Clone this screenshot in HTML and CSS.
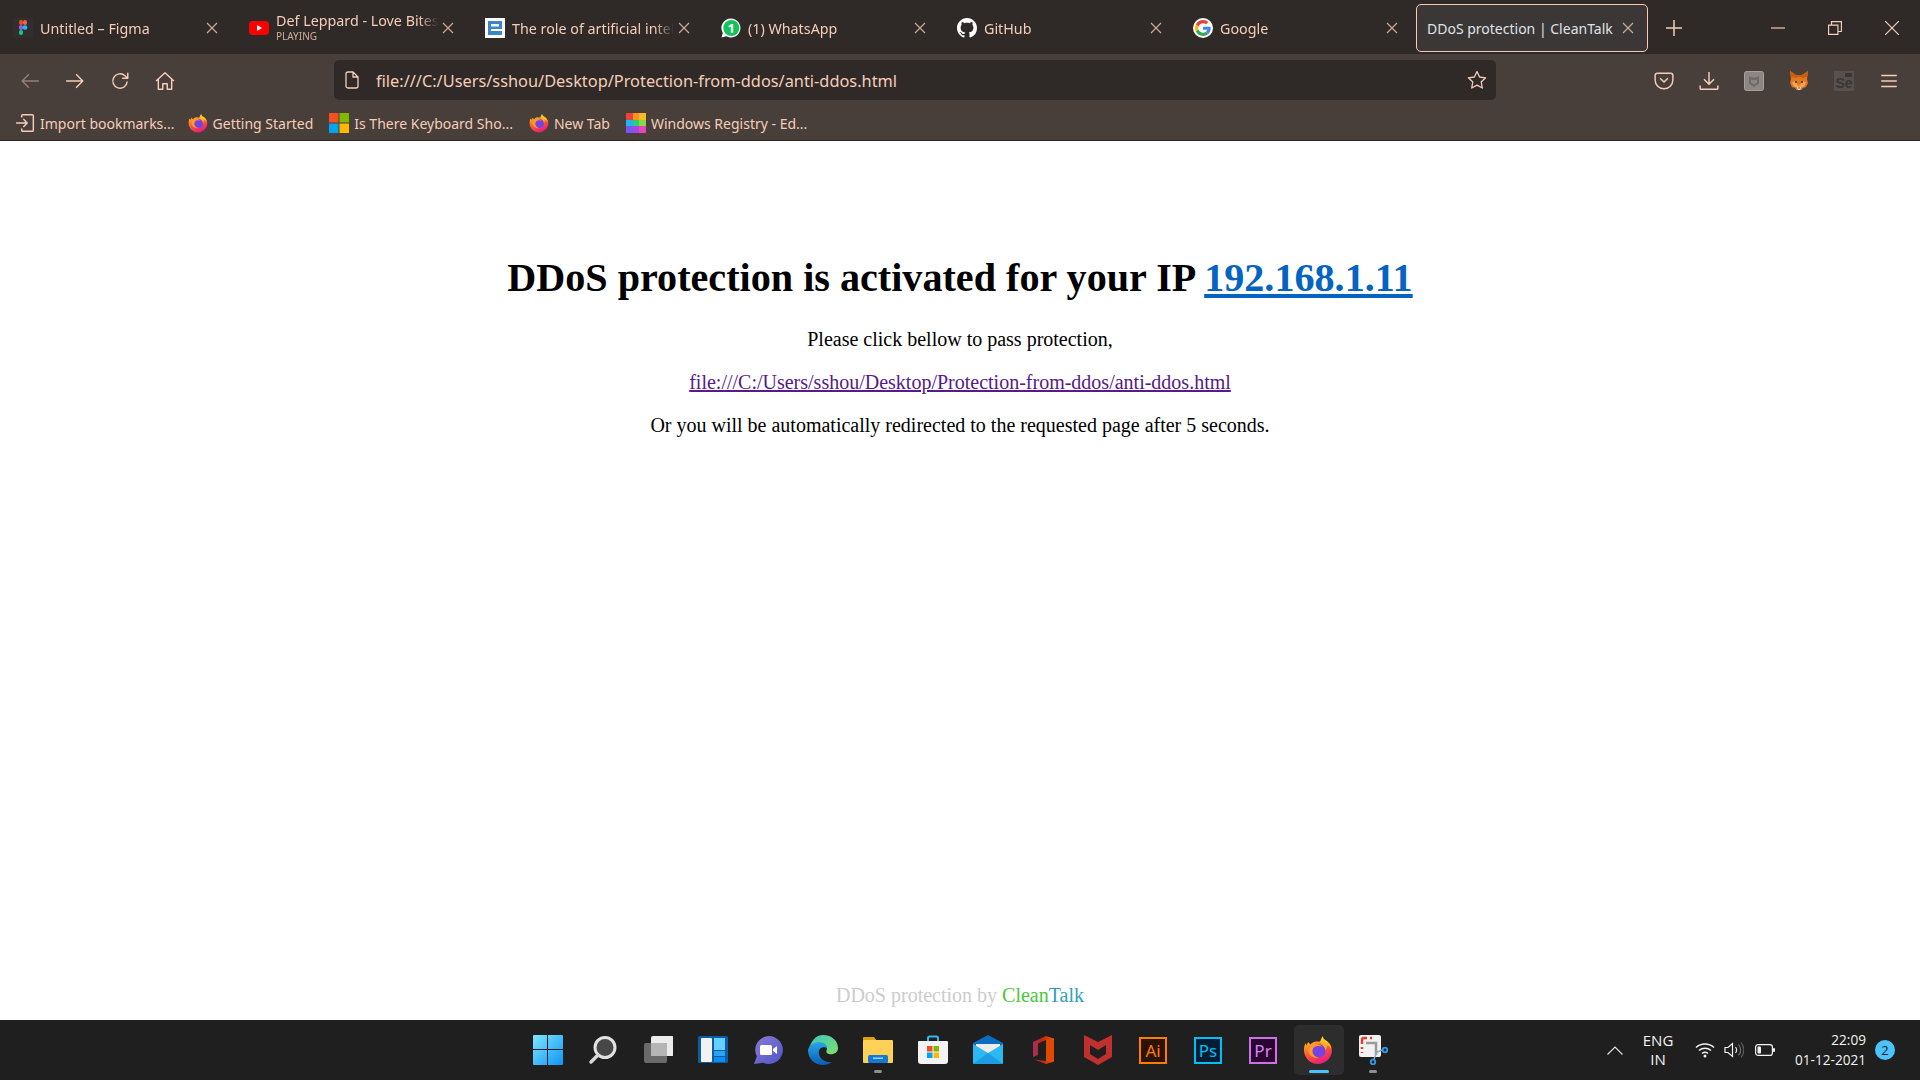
FILE: index.html
```html
<!DOCTYPE html>
<html lang="en">
<head>
  <meta charset="UTF-8">
  <title>DDoS protection | CleanTalk</title>
  <link rel="stylesheet" href="styles.css">
</head>
<body>
  <svg class="defs" width="0" height="0">
    <defs>
      <linearGradient id="fx-body" x1="0.2" y1="0" x2="0.7" y2="1">
        <stop offset="0" stop-color="#ffb01f"/>
        <stop offset="0.45" stop-color="#ff5a2c"/>
        <stop offset="1" stop-color="#e31587"/>
      </linearGradient>
      <linearGradient id="fx-top" x1="0.5" y1="0" x2="0.3" y2="1">
        <stop offset="0" stop-color="#ffe226"/>
        <stop offset="1" stop-color="#ff8a1f"/>
      </linearGradient>
      <symbol id="firefox" viewBox="0 0 32 32">
        <path fill="url(#fx-body)" d="M30 12c.9 2.300 1 4.600.7 6.500C29.500 25.800 23.400 31 16 31 7.700 31 1 24.300 1 16c0-2.600.6-5.400 2-7.500 0 1 .3 2 .8 2.800.3-1.500 1.200-2.900 2.300-3.800.3 1.300 1 2 2 2.400C10.300 7.500 13 6.500 15.500 7 22 7 28 7 30 12z"/>
        <path fill="url(#fx-top)" d="M21 1c.3 2.800 2.200 3.800 4.500 5.500 2.900 2.200 4.500 5.200 4.700 8.500-1.200-2.400-3-3.500-4.800-4.200.4 2-.4 5-3 6.700 1-3-.2-7.300-4.300-9.500C18.500 6 19.500 3.500 21 1z"/>
        <circle cx="17" cy="17" r="7" fill="#7542e5"/>
        <path fill="#ff9a2c" d="M6 14c2-3.500 6-5 10-4 2 .4 3.500 1.400 4.500 2.700-3-1.700-7-1.200-9.300.8-.9.900-1.300 2-1.300 3.200-.2 3.500 3 7 7 7.300-5 1.200-10-2-11.200-6C5.400 16.500 5.500 15 6 14z"/>
      </symbol>
      <symbol id="close-x" viewBox="0 0 12 12">
        <path d="M1 1l10 10M11 1L1 11" fill="none" stroke="currentColor" stroke-width="1.100"/>
      </symbol>
    </defs>
  </svg>

  <!-- Tab strip -->
  <div class="tab-strip">
    <div class="tab">
      <svg class="favicon" viewBox="0 0 20 20">
        <rect width="20" height="20" fill="#322e30"/>
        <rect x="6" y="2" width="4" height="5" rx="2" fill="#e44d26"/>
        <rect x="10" y="2" width="4" height="5" rx="2" fill="#f2604a"/>
        <rect x="6" y="7" width="4" height="5" rx="2" fill="#9a5cf0"/>
        <circle cx="12" cy="9.500" r="2.300" fill="#1abcfe"/>
        <rect x="6" y="12" width="4" height="5" rx="2" fill="#0acf83"/>
      </svg>
      <span class="tab-title">Untitled – Figma</span>
      <svg class="tab-close"><use href="#close-x"/></svg>
    </div>
    <div class="tab">
      <svg class="favicon" viewBox="0 0 20 20">
        <rect y="3" width="20" height="14" rx="4" fill="#f00"/>
        <path d="M8 7l5 3-5 3z" fill="#fff"/>
      </svg>
      <div class="tab-title two-line">
        <span>Def Leppard - Love Bites</span>
        <small>PLAYING</small>
      </div>
      <svg class="tab-close"><use href="#close-x"/></svg>
    </div>
    <div class="tab">
      <svg class="favicon" viewBox="0 0 20 20">
        <rect width="20" height="20" fill="#fff"/>
        <path d="M3 3h14v8H6v2h11v4H3z" fill="#3b87c6"/>
        <rect x="6" y="6" width="8" height="2.500" fill="#fff"/>
      </svg>
      <span class="tab-title">The role of artificial intelligence</span>
      <svg class="tab-close"><use href="#close-x"/></svg>
    </div>
    <div class="tab">
      <svg class="favicon" viewBox="0 0 20 20">
        <path d="M10 .5a9.500 9.500 0 1 1-4.700 17.800L.5 19.500l1.300-4.600A9.500 9.500 0 0 1 10 .5z" fill="#fff"/>
        <circle cx="10.300" cy="10" r="8" fill="#12c35c"/>
        <text class="wa-count" x="10.300" y="14.500">1</text>
      </svg>
      <span class="tab-title">(1) WhatsApp</span>
      <svg class="tab-close"><use href="#close-x"/></svg>
    </div>
    <div class="tab">
      <svg class="favicon" viewBox="0 0 16 16">
        <path fill="#fff" d="M8 0C3.580 0 0 3.580 0 8c0 3.540 2.290 6.530 5.470 7.590.4.070.55-.17.55-.38 0-.19-.01-.82-.01-1.490-2.010.37-2.530-.49-2.690-.94-.09-.23-.48-.94-.82-1.130-.28-.15-.68-.52-.01-.53.630-.01 1.080.58 1.230.82.720 1.210 1.870.87 2.330.66.070-.52.280-.87.510-1.070-1.780-.2-3.640-.89-3.640-3.950 0-.87.310-1.590.820-2.150-.08-.2-.36-1.020.080-2.120 0 0 .67-.21 2.200.82.640-.18 1.320-.27 2-.27.680 0 1.360.09 2 .27 1.530-1.040 2.200-.82 2.200-.82.440 1.100.160 1.920.080 2.120.510.560.820 1.270.820 2.150 0 3.070-1.870 3.750-3.650 3.950.290.250.540.730.540 1.480 0 1.070-.01 1.930-.01 2.200 0 .21.150.46.550.38A8.013 8.013 0 0 0 16 8c0-4.420-3.580-8-8-8z"/>
      </svg>
      <span class="tab-title">GitHub</span>
      <svg class="tab-close"><use href="#close-x"/></svg>
    </div>
    <div class="tab">
      <svg class="favicon" viewBox="-6 -6 60 60">
        <circle cx="24" cy="24" r="30" fill="#fff"/>
        <path fill="#EA4335" d="M24 9.500c3.540 0 6.710 1.220 9.210 3.600l6.850-6.850C35.900 2.380 30.470 0 24 0 14.620 0 6.510 5.380 2.560 13.220l7.980 6.190C12.430 13.720 17.740 9.500 24 9.500z"/>
        <path fill="#4285F4" d="M46.980 24.550c0-1.570-.15-3.090-.38-4.550H24v9.020h12.940c-.58 2.960-2.260 5.480-4.780 7.180l7.730 6c4.510-4.180 7.090-10.360 7.090-17.650z"/>
        <path fill="#FBBC05" d="M10.530 28.590c-.48-1.450-.76-2.990-.76-4.590s.27-3.140.76-4.590l-7.980-6.190C.92 16.460 0 20.120 0 24c0 3.880.92 7.540 2.560 10.780l7.970-6.190z"/>
        <path fill="#34A853" d="M24 48c6.480 0 11.930-2.130 15.890-5.810l-7.730-6c-2.150 1.450-4.920 2.300-8.160 2.300-6.260 0-11.570-4.220-13.470-9.910l-7.980 6.190C6.510 42.620 14.620 48 24 48z"/>
      </svg>
      <span class="tab-title">Google</span>
      <svg class="tab-close"><use href="#close-x"/></svg>
    </div>
    <div class="tab active">
      <span class="tab-title">DDoS protection | CleanTalk</span>
      <svg class="tab-close"><use href="#close-x"/></svg>
    </div>
    <svg class="new-tab" viewBox="0 0 16 16"><path d="M8 0v16M0 8h16" fill="none" stroke="currentColor" stroke-width="1.500"/></svg>
    <div class="window-controls">
      <div class="win-btn"><svg viewBox="0 0 12 12"><path d="M0 6h12" stroke="currentColor" fill="none"/></svg></div>
      <div class="win-btn"><svg viewBox="0 0 12 12"><path d="M.5 3.500h8v8h-8zM3 3.500V.5h8.500V9H8.500" stroke="currentColor" fill="none"/></svg></div>
      <div class="win-btn"><svg viewBox="0 0 12 12"><path d="M0 0l12 12M12 0L0 12" stroke="currentColor" fill="none"/></svg></div>
    </div>
  </div>

  <!-- Navigation toolbar -->
  <div class="toolbar">
    <svg class="tool-icon dim" viewBox="0 0 18 18"><path d="M17 9H2M8 3L2 9l6 6" class="stroke"/></svg>
    <svg class="tool-icon" viewBox="0 0 18 18"><path d="M1 9h15M10 3l6 6-6 6" class="stroke"/></svg>
    <svg class="tool-icon" viewBox="0 0 18 18"><path d="M15.500 9.500a6.500 6.500 0 1 1-2-5.200L16 6.500M16 1.500v5h-5" class="stroke"/></svg>
    <svg class="tool-icon" viewBox="0 0 18 18"><path d="M1 9l8-7.500L17 9M3 7.500V16.500h4v-5h4v5h4V7.500" class="stroke"/></svg>
    <div class="urlbar">
      <svg class="page-icon" viewBox="0 0 14 18"><path d="M1 3a2 2 0 0 1 2-2h5l5 5v9a2 2 0 0 1-2 2H3a2 2 0 0 1-2-2zM8 1v5h5" class="stroke"/></svg>
      <span class="url-text">file:///C:/Users/sshou/Desktop/Protection-from-ddos/anti-ddos.html</span>
      <svg class="star-icon" viewBox="0 0 20 20"><path d="M10 1.500l2.600 5.500 6 .8-4.400 4.200 1.100 6L10 15.100 4.700 18l1.100-6L1.400 7.800l6-.8z" class="stroke"/></svg>
    </div>
    <div class="toolbar-right">
      <svg class="tool-icon" viewBox="0 0 18 18"><path d="M3 2h12a2 2 0 0 1 2 2v4a8 8 0 0 1-16 0V4a2 2 0 0 1 2-2zM5.500 6.500L9 10l3.500-3.500" class="stroke"/></svg>
      <svg class="tool-icon" viewBox="0 0 18 18"><path d="M9 1v11M4.500 7.500L9 12l4.500-4.500M1 13v2.500a1 1 0 0 0 1 1h14a1 1 0 0 0 1-1V13" class="stroke"/></svg>
      <svg class="ext-icon" viewBox="0 0 20 20">
        <rect x=".5" y=".5" width="19" height="19" rx="2" fill="#8c8784" stroke="#a5a09d"/>
        <path d="M5 5l2.500 1.500h5L15 5v7.500L10 16l-5-3.500z" fill="#6f6a67"/>
        <path d="M7 8.500l3 1 3-1v3l-3 2-3-2z" fill="#8c8784"/>
      </svg>
      <svg class="ext-icon" viewBox="0 0 20 20">
        <path d="M1 0l6 4h6l6-4-1 8 1 4-2 4-3 1-1.500 2h-5L6 17l-3-1-2-4 1-4z" fill="#e2761b"/>
        <path d="M1 0l6 4h6l6-4-1 6-5 1-1-1H8L7 7 2 6z" fill="#c75f12"/>
        <path d="M3 11l4-1 1.500 3.500L10 15l1.500-1.500L13 10l4 1-1.500 4-3 1.500L11 18H9l-1.500-1.500-3-1.500z" fill="#f6a15a"/>
        <circle cx="7" cy="11" r="1" fill="#3a2a20"/>
        <circle cx="13" cy="11" r="1" fill="#3a2a20"/>
        <path d="M8 16h4l-1 3H9z" fill="#ece4dc"/>
        <path d="M9 16.500h2l-1 1.500z" fill="#222"/>
      </svg>
      <div class="ext-se"><span>Se</span></div>
      <svg class="tool-icon" viewBox="0 0 18 18"><path d="M2 4h14M2 9h14M2 14h14" class="stroke"/></svg>
    </div>
  </div>

  <!-- Bookmarks -->
  <div class="bookmarks">
    <div class="bookmark">
      <svg class="bm-icon" viewBox="0 0 18 18"><path d="M6 4V2.500a1 1 0 0 1 1-1h8.500a1 1 0 0 1 1 1v13a1 1 0 0 1-1 1H7a1 1 0 0 1-1-1V14M1 9h9.500M7.500 5.500L11 9l-3.500 3.500" class="stroke"/></svg>
      <span>Import bookmarks...</span>
    </div>
    <div class="bookmark">
      <svg class="bm-icon"><use href="#firefox"/></svg>
      <span>Getting Started</span>
    </div>
    <div class="bookmark">
      <svg class="bm-icon" viewBox="0 0 20 20">
        <rect width="9.500" height="9.500" fill="#f25022"/>
        <rect x="10.500" width="9.500" height="9.500" fill="#7fba00"/>
        <rect y="10.500" width="9.500" height="9.500" fill="#00a4ef"/>
        <rect x="10.500" y="10.500" width="9.500" height="9.500" fill="#ffb900"/>
      </svg>
      <span>Is There Keyboard Sho...</span>
    </div>
    <div class="bookmark">
      <svg class="bm-icon"><use href="#firefox"/></svg>
      <span>New Tab</span>
    </div>
    <div class="bookmark">
      <svg class="bm-icon" viewBox="0 0 20 20">
        <rect width="7" height="7" fill="#e8443a"/><rect x="7" width="6" height="7" fill="#f79321"/><rect x="13" width="7" height="7" fill="#fbb827"/>
        <rect y="7" width="7" height="6" fill="#1eb4f0"/><rect x="7" y="7" width="6" height="6" fill="#2fd06c"/><rect x="13" y="7" width="7" height="6" fill="#88d84a"/>
        <rect y="13" width="7" height="7" fill="#7a56f0"/><rect x="7" y="13" width="6" height="7" fill="#a548e8"/><rect x="13" y="13" width="7" height="7" fill="#e845b4"/>
      </svg>
      <span>Windows Registry - Ed...</span>
    </div>
  </div>

  <!-- Page content -->
  <main class="page">
    <h1>DDoS protection is activated for your IP <a class="ip-link" href="#">192.168.1.11</a></h1>
    <p>Please click bellow to pass protection,</p>
    <p><a class="visited-link" href="#">file:///C:/Users/sshou/Desktop/Protection-from-ddos/anti-ddos.html</a></p>
    <p>Or you will be automatically redirected to the requested page after 5 seconds.</p>
    <div class="page-footer">DDoS protection by <span class="clean">Clean</span><span class="talk">Talk</span></div>
  </main>

  <!-- Windows taskbar -->
  <div class="taskbar">
    <div class="task-spacer"></div>
    <div class="task-icons">
      <div class="task">
        <svg viewBox="0 0 30 30">
          <defs><linearGradient id="win-g" x1="0" y1="0" x2="1" y2="1"><stop offset="0" stop-color="#7fe6ff"/><stop offset="1" stop-color="#0f94f5"/></linearGradient></defs>
          <path d="M0 1a1 1 0 0 1 1-1h13v14H0zM15 0h14a1 1 0 0 1 1 1v13H15zM0 15h14v15H1a1 1 0 0 1-1-1zM15 15h15v14a1 1 0 0 1-1 1H15z" fill="url(#win-g)"/>
        </svg>
      </div>
      <div class="task">
        <svg viewBox="0 0 30 30">
          <circle cx="17" cy="12.500" r="10" fill="#474747" stroke="#e2e2e2" stroke-width="3"/>
          <path d="M10 20l-7 7" stroke="#d8d8d8" stroke-width="3.500" stroke-linecap="round"/>
        </svg>
      </div>
      <div class="task">
        <svg viewBox="0 0 30 30">
          <rect x="1" y="8" width="23" height="20" rx="2" fill="#6a6a6a"/>
          <rect x="8" y="1" width="23" height="20" rx="2" fill="#ececec"/>
          <rect x="8" y="8" width="16" height="13" fill="#b5b5b5"/>
        </svg>
      </div>
      <div class="task">
        <svg viewBox="0 0 30 30">
          <rect width="30" height="27" y="1" rx="1.500" fill="#0c5ca8"/>
          <rect x="3" y="3" width="11" height="24" rx="1" fill="#f2f2f2"/>
          <rect x="16" y="3" width="11" height="12" fill="#63d0ff"/>
          <rect x="16" y="16" width="11" height="5" fill="#2aa3f2"/>
          <rect x="16" y="22" width="11" height="5" fill="#0f8cf0"/>
        </svg>
      </div>
      <div class="task">
        <svg viewBox="0 0 30 30">
          <defs><linearGradient id="chat-g" x1="0" y1="0" x2="1" y2="1"><stop offset="0" stop-color="#8b7bd0"/><stop offset="1" stop-color="#4d55c8"/></linearGradient></defs>
          <path d="M16 1a14 14 0 1 1-6 26.700L1 29l2.800-7.500A14 14 0 0 1 16 1z" fill="url(#chat-g)"/>
          <rect x="7" y="10" width="12" height="10" rx="1.500" fill="#fff"/>
          <path d="M20 14l4-3v8l-4-3z" fill="#fff"/>
        </svg>
      </div>
      <div class="task">
        <svg viewBox="0 0 30 30">
          <defs>
            <linearGradient id="edge-a" x1="0" y1="0" x2="1" y2="1"><stop offset="0" stop-color="#39c8c0"/><stop offset="1" stop-color="#7ee06a"/></linearGradient>
            <linearGradient id="edge-b" x1="0" y1="0" x2="0" y2="1"><stop offset="0" stop-color="#2aa4e8"/><stop offset="1" stop-color="#0a5fb0"/></linearGradient>
          </defs>
          <path d="M15 0c9 0 15 6 15 13 0 5-5 7-9 6-3-.6-3-3-2-5 0-4-4-6-8-5-5 1-9 4-11 9C2 7 7 0 15 0z" fill="url(#edge-a)"/>
          <path d="M0 15c1-5 6-8 11-8 5 0 8 3 8 6-5-2-9 1-8 6 1 5 6 9 13 8-3 2-6 3-9 3C7 30 0 24 0 15z" fill="url(#edge-b)"/>
        </svg>
      </div>
      <div class="task open">
        <svg viewBox="0 0 30 30">
          <path d="M0 3a1 1 0 0 1 1-1h10l3 4h-14z" fill="#d9a00f"/>
          <rect y="5" width="30" height="23" rx="1" fill="#ffd257"/>
          <rect x="5" y="20" width="20" height="8" rx="1.500" fill="#1479d6"/>
          <rect x="10" y="22.500" width="10" height="1.500" fill="#9fd3ff"/>
        </svg>
      </div>
      <div class="task">
        <svg viewBox="0 0 30 30">
          <path d="M10 6V3a1.500 1.500 0 0 1 1.500-1.500h7A1.500 1.500 0 0 1 20 3v3" fill="none" stroke="#35b8f0" stroke-width="2"/>
          <path d="M1 6h28a1 1 0 0 1 1 1v19a3 3 0 0 1-3 3H3a3 3 0 0 1-3-3V7a1 1 0 0 1 1-1z" fill="#f3f3f3"/>
          <rect x="9" y="11" width="5.500" height="5.500" fill="#f25022"/>
          <rect x="15.500" y="11" width="5.500" height="5.500" fill="#7fba00"/>
          <rect x="9" y="17.500" width="5.500" height="5.500" fill="#00a4ef"/>
          <rect x="15.500" y="17.500" width="5.500" height="5.500" fill="#ffb900"/>
        </svg>
      </div>
      <div class="task">
        <svg viewBox="0 0 30 30">
          <path d="M15 0L30 8v6H0V8z" fill="#0b6cc0"/>
          <path d="M3 9h24v5l-12 7-12-7z" fill="#ececec"/>
          <path d="M0 9l15 9 15-9v19a1 1 0 0 1-1 1H1a1 1 0 0 1-1-1z" fill="#2cb8f0"/>
          <path d="M0 29l15-11 15 11z" fill="#1591de" opacity="0.700"/>
        </svg>
      </div>
      <div class="task">
        <svg viewBox="0 0 30 30">
          <defs><linearGradient id="office-g" x1="0" y1="0" x2="1" y2="0"><stop offset="0" stop-color="#a0325e"/><stop offset="0.4" stop-color="#c8200f"/><stop offset="1" stop-color="#e65a00"/></linearGradient></defs>
          <path d="M18 1l8 2.500v23L18 29 6 24.500l12 1.500V5L10 8.500V20l-5 2V7z" fill="url(#office-g)"/>
          <path d="M18 4.500v21.500l8-1V5z" fill="#e04a00"/>
        </svg>
      </div>
      <div class="task">
        <svg viewBox="0 0 30 30"><path d="M1 0l14 7 14-7v22l-14 8-14-8zM7 10v9l8 5 8-5v-9l-8 5z" fill="#c0302e" fill-rule="evenodd"/></svg>
      </div>
      <div class="task"><div class="adobe ai"><span>Ai</span></div></div>
      <div class="task"><div class="adobe ps"><span>Ps</span></div></div>
      <div class="task"><div class="adobe pr"><span>Pr</span></div></div>
      <div class="task current"><svg><use href="#firefox"/></svg></div>
      <div class="task open">
        <svg viewBox="0 0 30 30">
          <rect x="1" width="22" height="22" rx="2" fill="#f1f1f1"/>
          <path d="M4 9V4.500A1.500 1.500 0 0 1 5.500 3H9M12 3h2M4 12v2M4 17v1" stroke="#e0412c" stroke-width="2.500" fill="none"/>
          <path d="M8 8h10v12" stroke="#9a9a9a" stroke-width="2.500" fill="none"/>
          <path d="M19 17l-3 7M17 18l7-3" stroke="#9aa7b0" stroke-width="1.500"/>
          <circle cx="27" cy="15" r="2.300" fill="none" stroke="#2a9df0" stroke-width="1.800"/>
          <circle cx="15" cy="27" r="2.300" fill="none" stroke="#2a9df0" stroke-width="1.800"/>
        </svg>
      </div>
    </div>
    <div class="tray">
      <svg class="tray-chevron" viewBox="0 0 16 9"><path d="M.5 8.500L8 1l7.500 7.500" fill="none" stroke="#e6e6e6" stroke-width="1.100"/></svg>
      <div class="lang"><span>ENG</span><span>IN</span></div>
      <svg class="tray-wifi" viewBox="0 0 20 16">
        <path d="M1 5.500c5-4.600 13-4.600 18 0M4 8.500c3.400-3 8.600-3 12 0M7 11.500c1.800-1.500 4.200-1.500 6 0" fill="none" stroke="#f2f2f2" stroke-width="1.500"/>
        <circle cx="10" cy="14" r="1.500" fill="#f2f2f2"/>
      </svg>
      <svg class="tray-sound" viewBox="0 0 20 16">
        <path d="M1 5.500h3L8.500 1.500v13L4 10.500H1z" fill="none" stroke="#f2f2f2" stroke-width="1.200"/>
        <path d="M11.500 5c1.500 2 1.500 4 0 6" fill="none" stroke="#e6e6e6" stroke-width="1.200"/>
        <path d="M14.500 2.500c2.800 3.500 2.800 7.500 0 11" fill="none" stroke="#6f6f6f" stroke-width="1.200"/>
        <path d="M17 .5c3.600 4.800 3.600 10.200 0 15" fill="none" stroke="#5c5c5c" stroke-width="1.200"/>
      </svg>
      <svg class="tray-battery" viewBox="0 0 20 12">
        <rect x=".6" y=".6" width="16.800" height="10.800" rx="2.500" fill="none" stroke="#f2f2f2" stroke-width="1.200"/>
        <rect x="2.500" y="2.500" width="3.500" height="7" rx="1" fill="#f2f2f2"/>
        <rect x="18" y="4" width="2" height="4" rx="1" fill="#f2f2f2"/>
      </svg>
      <div class="clock"><span>22:09</span><span>01-12-2021</span></div>
      <div class="notify-badge">2</div>
    </div>
  </div>
</body>
</html>
```

FILE: styles.css
```css
/* Base reset */
* { margin: 0; padding: 0; box-sizing: border-box; }
html, body { height: 100%; }
body {
  display: flex; flex-direction: column; height: 100vh; overflow: hidden;
  background-color: #fff; font-family: "Liberation Serif", serif;
}
.defs { position: absolute; }
.stroke { fill: none; stroke: currentColor; stroke-width: 1.300; stroke-linejoin: round; }

/* Tab strip */
.tab-strip {
  display: flex; align-items: center; gap: 4px; height: 54px; flex: none; padding-top: 2px;
  background-color: #2f2a27; color: #f6cdb9;
  font-family: "Noto Sans", sans-serif; font-size: 14.300px;
}
.tab {
  display: flex; align-items: center; width: 232px; height: 48px;
  padding: 0 13px 0 12px; border: 1px solid transparent; border-radius: 5px;
}
.tab.active {
  background-color: #3b3736; border-color: #f9c9b3; color: #dfe3e6;
  padding-left: 10px; font-size: 14px;
}
.favicon { width: 20px; height: 20px; margin-right: 7px; flex: none; }
.tab-title {
  flex: 1; min-width: 0; white-space: nowrap; overflow: hidden;
  -webkit-mask-image: linear-gradient(to right, #000 88%, transparent);
  mask-image: linear-gradient(to right, #000 88%, transparent);
}
.tab.active .tab-title { -webkit-mask-image: none; mask-image: none; }
.two-line { display: flex; flex-direction: column; line-height: 18px; margin-top: -1px; }
.two-line small { font-size: 10px; line-height: 13px; opacity: 0.8; }
.tab-close { width: 12px; height: 12px; flex: none; margin-left: 4px; opacity: 0.8; }
.tab.active .tab-close { color: #f6cdb9; }
.wa-count { font: bold 13px "Noto Sans", sans-serif; fill: #fff; text-anchor: middle; }
.new-tab { width: 16px; height: 16px; margin-left: 14px; flex: none; }
.window-controls { display: flex; margin-left: auto; }
.win-btn { display: flex; align-items: center; justify-content: center; width: 57px; height: 48px; }
.win-btn svg { width: 14px; height: 14px; }

/* Navigation toolbar */
.toolbar {
  display: flex; align-items: center; height: 52px; flex: none; padding-left: 20px;
  background-color: #483f3a; color: #f6cdb9;
  font-family: "Noto Sans", sans-serif;
}
.tool-icon { width: 20px; height: 20px; flex: none; margin: 1px 25px 0 0; }
.tool-icon.dim { opacity: 0.45; }
.urlbar {
  display: flex; align-items: center; width: 1162px; height: 40px; margin-left: 134px;
  padding: 0 9px 0 11px;
  background-color: #2f2a27; border-radius: 5px; font-size: 16.350px;
}
.page-icon { width: 14px; height: 18px; flex: none; margin-right: 17px; }
.url-text { flex: 1; white-space: nowrap; padding-top: 2px; }
.star-icon { width: 20px; height: 20px; flex: none; }
.toolbar-right { display: flex; align-items: center; margin-left: auto; padding: 1px 21px 0 0; gap: 25px; }
.toolbar-right .tool-icon { margin: 0; }
.ext-icon { width: 20px; height: 20px; flex: none; }
.ext-se {
  position: relative; display: flex; align-items: flex-end; justify-content: center;
  width: 20px; height: 20px;
  background-color: #56514e; color: #393533;
  font: bold 14px/16px "Liberation Sans", sans-serif;
}
.ext-se::after {
  content: ""; position: absolute; right: 2px; top: 2px; width: 7px; height: 4px;
  background-color: #393533;
}

/* Bookmarks bar */
.bookmarks {
  display: flex; align-items: center; height: 35px; flex: none; padding-left: 15px; gap: 16px;
  background-color: #483f3a; color: #f6cdb9; border-bottom: 1px solid #2a2522;
  font-family: "Noto Sans", sans-serif; font-size: 14px;
}
.bookmark { display: flex; align-items: center; gap: 5px; white-space: nowrap; }
.bookmark:first-child { margin-right: -3px; }
.bm-icon { width: 20px; height: 20px; flex: none; }

/* Page content */
.page {
  flex: 1; min-height: 0; display: flex; flex-direction: column; align-items: center;
  padding-top: 115px; color: #000; font-size: 20px;
}
.page h1 { font-size: 40.150px; line-height: 44px; margin-bottom: 28px; }
.page p { line-height: 22px; margin-bottom: 21px; }
.ip-link { color: #0563c1; }
.visited-link { color: #551a8b; }
.page-footer { margin-top: auto; margin-bottom: 14px; color: #ccc; line-height: 22px; }
.clean { color: #49c73b; }
.talk { color: #349ebf; }

/* Windows taskbar */
.taskbar {
  display: grid; grid-template-columns: 1fr auto 1fr; align-items: center;
  height: 60px; flex: none; background-color: #1f1f1f; color: #f2f2f2;
  font-family: "Open Sans", sans-serif; font-size: 13.600px;
}
.task-icons { display: flex; margin-left: 1px; }
.task {
  position: relative; display: flex; align-items: center; justify-content: center;
  width: 55px; height: 60px;
}
.task svg { width: 30px; height: 30px; }
.task.current::before {
  content: ""; position: absolute; left: 3px; top: 5px; width: 50px; height: 50px;
  background-color: #2d2d2d; border-radius: 5px;
}
.task.current svg { position: relative; }
.task.open::after, .task.current::after {
  content: ""; position: absolute; left: 23px; bottom: 7px; width: 8px; height: 3px;
  background-color: #8f8f8f; border-radius: 2px;
}
.task.current::after { left: 18px; width: 20px; background-color: #4cc2ff; }
.adobe {
  display: flex; align-items: center; justify-content: center; width: 28px; height: 27px;
  border: 2px solid; font: 17px "Noto Sans", sans-serif;
}
.adobe.ai { color: #ff7c00; border-color: #ff7c00; background-color: #2b1300; }
.adobe.ps { color: #00c0f5; border-color: #00c0f5; background-color: #001d33; }
.adobe.pr { color: #d58af0; border-color: #d070e8; background-color: #2a0530; }

/* System tray */
.tray { display: flex; align-items: center; justify-content: flex-end; padding-right: 25px; }
.tray-chevron { width: 16px; height: 9px; }
.lang { display: flex; flex-direction: column; align-items: center; width: 32px; margin-left: 19px; line-height: 19px; font-size: 15px; }
.tray-wifi { width: 20px; height: 16px; margin-left: 21px; }
.tray-sound { width: 20px; height: 16px; margin-left: 9px; }
.tray-battery { width: 20px; height: 12px; margin-left: 11px; }
.clock { display: flex; flex-direction: column; align-items: flex-end; margin-left: 20px; line-height: 20px; }
.notify-badge {
  display: flex; align-items: center; justify-content: center;
  width: 20px; height: 20px; margin-left: 9px;
  background-color: #4cc2ff; color: #1f1f1f; border-radius: 50%;
  font-size: 13px;
}
```
